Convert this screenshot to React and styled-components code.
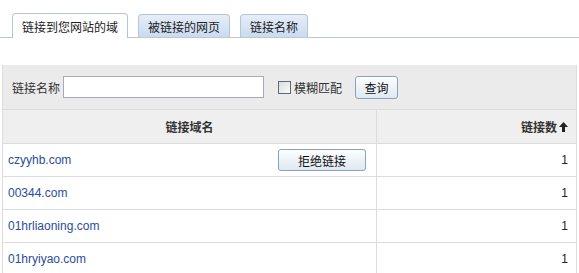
import React from "react";
import styled, { createGlobalStyle } from "styled-components";

const GlobalStyle = createGlobalStyle`
  html, body { margin: 0; padding: 0; background: #fff; }
  body {
    font-family: "Liberation Sans", "Noto Sans CJK SC", sans-serif;
    font-size: 12px;
    color: #333;
  }
`;

const Page = styled.div`
  width: 579px;
  height: 273px;
  overflow: hidden;
  padding-top: 13px;
  box-sizing: border-box;
`;

const TabBar = styled.div`
  display: flex;
  align-items: flex-end;
  gap: 10px;
  height: 24px;
  padding-left: 12px;
  border-bottom: 1px solid #b9c8d7;
`;

const Tab = styled.div`
  height: ${p => (p.active ? "25px" : "23px")};
  box-sizing: border-box;
  padding: 0 9px;
  display: flex;
  align-items: center;
  border: 1px solid #b4c6d9;
  border-bottom: none;
  border-radius: 4px 4px 0 0;
  margin-bottom: ${p => (p.active ? "-1px" : "0")};
  background: ${p => (p.active ? "#fff" : "linear-gradient(#e6eef8, #c9dbf0)")};
  color: #222;
  white-space: nowrap;
`;

const Panel = styled.div`
  margin: 27px 2px 0 2px;
  border-left: 1px solid #dcdcdc;
  border-right: 1px solid #dcdcdc;
`;

const FilterBar = styled.div`
  display: flex;
  align-items: center;
  height: 44px;
  padding-left: 9px;
  background: #ebebeb;
  border-bottom: 1px solid #dcdcdc;
`;

const Label = styled.span`
  margin-right: 3px;
`;

const TextInput = styled.input`
  width: 201px;
  height: 22px;
  box-sizing: border-box;
  border: 1px solid #a5acb5;
  background: #fff;
  margin: 0 14px 0 0;
  padding: 0 3px;
`;

const Check = styled.label`
  display: flex;
  align-items: center;
  gap: 3px;
  margin-right: 13px;
`;

const Box = styled.span`
  width: 11px;
  height: 11px;
  border: 1px solid #5a6a7a;
  background: linear-gradient(135deg, #dcdcdc, #fafafa);
`;

const Button = styled.button`
  height: ${p => p.h || 23}px;
  width: ${p => p.w}px;
  padding: 0;
  font-family: inherit;
  font-size: 12px;
  color: #111;
  border: 1px solid #8aa2bb;
  border-radius: 3px;
  background: linear-gradient(#fdfefe, #dfe8f1);
`;

const Grid = styled.div`
  display: grid;
  grid-template-columns: 373px 1fr;
`;

const HeadCell = styled.div`
  height: 33px;
  display: flex;
  align-items: center;
  justify-content: ${p => (p.right ? "flex-end" : "center")};
  padding-right: ${p => (p.right ? "8px" : "0")};
  background: #efefef;
  font-weight: bold;
  color: #333;
  border-bottom: 1px solid #dcdcdc;
  border-left: ${p => (p.right ? "1px solid #dcdcdc" : "none")};
`;

const Arrow = styled.svg`
  margin-left: 2px;
`;

const Cell = styled.div`
  height: 32px;
  display: flex;
  align-items: center;
  justify-content: ${p => (p.right ? "flex-end" : "space-between")};
  padding: ${p => (p.right ? "0 8px 0 0" : "0 10px 0 5px")};
  border-bottom: 1px solid #dcdcdc;
  border-left: ${p => (p.right ? "1px solid #dcdcdc" : "none")};
  color: #222;
`;

const Link = styled.a`
  color: #2d4b9b;
  text-decoration: none;
`;

const rows = [
  { domain: "czyyhb.com", count: 1, reject: true },
  { domain: "00344.com", count: 1 },
  { domain: "01hrliaoning.com", count: 1 },
  { domain: "01hryiyao.com", count: 1 },
];

export default function App() {
  return (
    <Page>
      <GlobalStyle />
      <TabBar>
        <Tab active>链接到您网站的域</Tab>
        <Tab>被链接的网页</Tab>
        <Tab>链接名称</Tab>
      </TabBar>
      <Panel>
        <FilterBar>
          <Label>链接名称</Label>
          <TextInput />
          <Check>
            <Box />
            模糊匹配
          </Check>
          <Button w={43}>查询</Button>
        </FilterBar>
        <Grid>
          <HeadCell>链接域名</HeadCell>
          <HeadCell right>
            链接数
            <Arrow width="9" height="10" viewBox="0 0 9 10">
              <path d="M4.5 0 L9 5 H6 V10 H3 V5 H0 Z" fill="#222" />
            </Arrow>
          </HeadCell>
          {rows.map(r => (
            <React.Fragment key={r.domain}>
              <Cell>
                <Link href="#">{r.domain}</Link>
                {r.reject && <Button w={88} h={22}>拒绝链接</Button>}
              </Cell>
              <Cell right>{r.count}</Cell>
            </React.Fragment>
          ))}
        </Grid>
      </Panel>
    </Page>
  );
}
